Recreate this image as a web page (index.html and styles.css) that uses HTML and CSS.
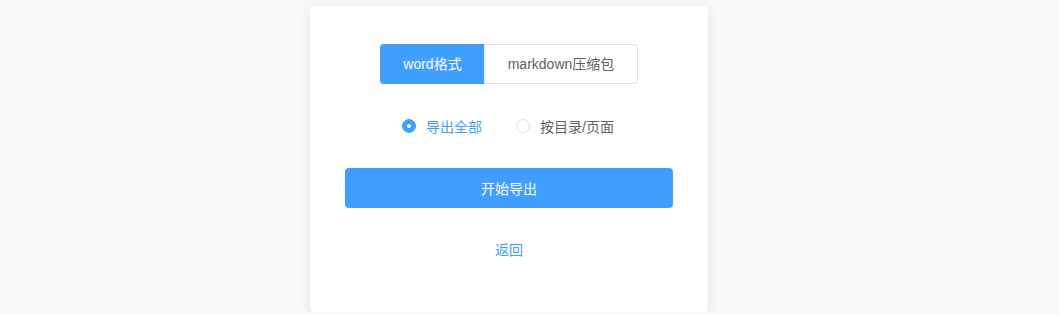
FILE: index.html
```html
<!DOCTYPE html>
<html>
<head>
  <title>导出</title>
  <link rel="stylesheet" href="styles.css">
</head>
<body>

<div class="export-card">
  <div class="format-tabs">
    <label class="tab active">word格式</label>
    <label class="tab">markdown压缩包</label>
  </div>

  <div class="scope">
    <label class="radio checked"><span class="dot"></span>导出全部</label>
    <label class="radio"><span class="dot"></span>按目录/页面</label>
  </div>

  <button class="start">开始导出</button>

  <div class="back"><a href="#">返回</a></div>
</div>

</body>
</html>
```

FILE: styles.css
```css
body { margin: 0; background: #f9f9f9; font-family: "Liberation Sans", "Noto Sans CJK SC", sans-serif; font-size: 14px; color: #606266; }
.export-card { width: 328px; margin: 6px 0 0 310px; padding: 38px 35px 52px; background: #fff; border-radius: 4px; box-shadow: 0 2px 12px 0 rgba(0, 0, 0, .1); }
.format-tabs { display: flex; justify-content: center; }
.tab { box-sizing: border-box; height: 40px; line-height: 38px; text-align: center; border: 1px solid #dcdfe6; cursor: pointer; }
.tab:first-child { width: 104px; border-radius: 4px 0 0 4px; border-right: 0; }
.tab:last-child { width: 154px; border-radius: 0 4px 4px 0; }
.tab.active { background: #409eff; border-color: #409eff; color: #fff; }
.scope { display: flex; justify-content: center; gap: 34px; height: 24px; align-items: center; margin: 30px 0 0 -2px; }
.radio { display: flex; align-items: center; gap: 10px; cursor: pointer; }
.dot { width: 12px; height: 12px; border: 1px solid #dcdfe6; border-radius: 50%; display: inline-block; position: relative; }
.radio.checked { color: #409eff; }
.radio.checked .dot { background: #409eff; border-color: #409eff; }
.radio.checked .dot::after { content: ""; position: absolute; width: 4px; height: 4px; background: #fff; border-radius: 50%; left: 4px; top: 4px; }
.start { display: block; width: 100%; height: 40px; margin-top: 30px; border: 0; border-radius: 4px; background: #409eff; color: #fff; font: inherit; cursor: pointer; }
.back { margin-top: 32px; line-height: 20px; text-align: center; }
.back a { color: #409eff; text-decoration: none; }
```
